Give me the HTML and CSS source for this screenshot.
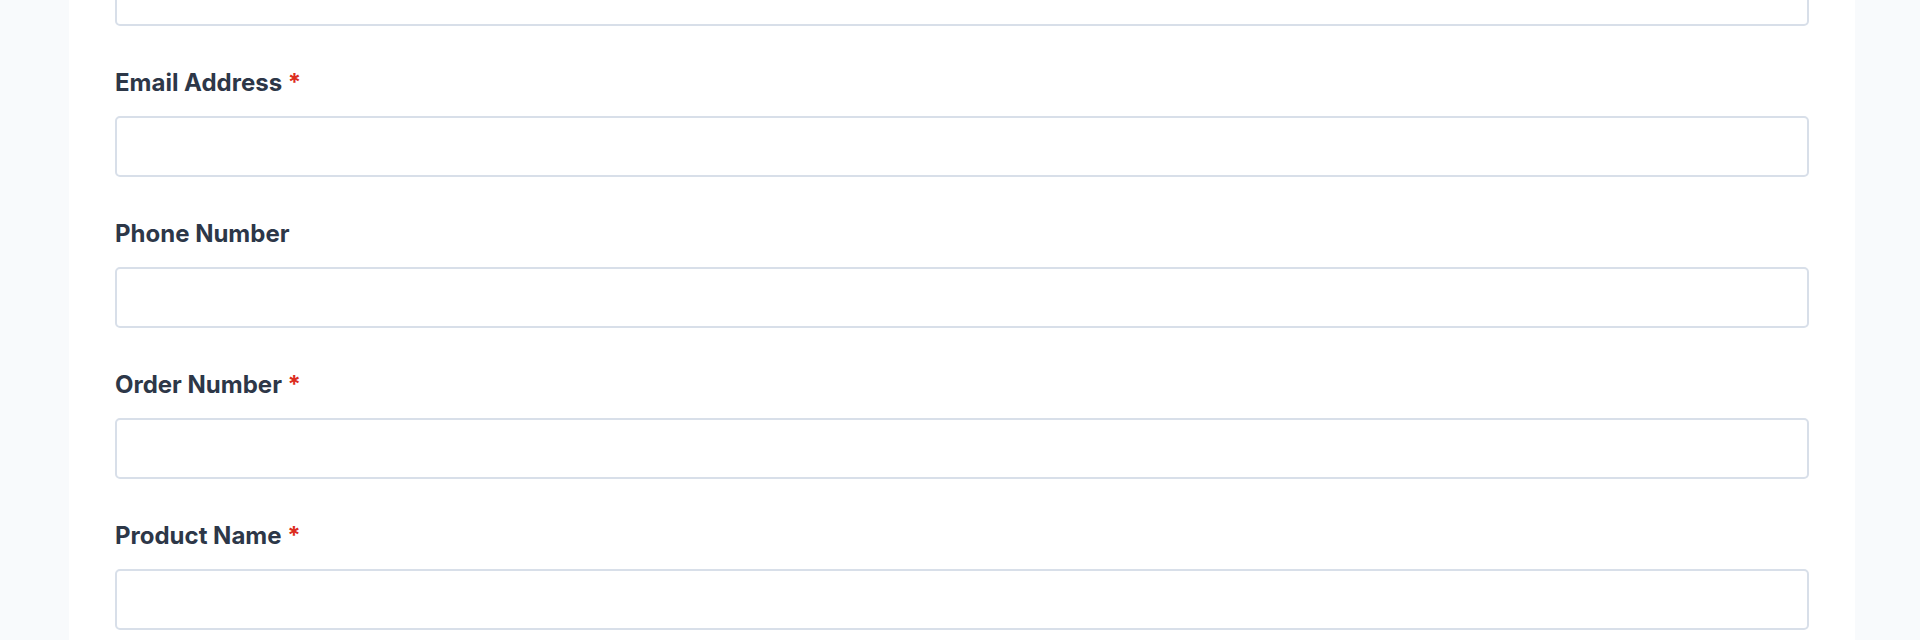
FILE: index.html
```html
<!DOCTYPE html>
<html lang="en">
<head>
  <meta charset="UTF-8" />
  <meta name="viewport" content="width=device-width, initial-scale=1.0">
  <title>Contact Form</title>
  <link rel="stylesheet" href="styles.css">
</head>
<body>
  <div class="wrapper">
    <form class="contact-form">
      <div class="form-group">
        <input type="text" id="fullName" name="fullName" aria-label="Full Name" required>
      </div>

      <div class="form-group">
        <label for="email">Email Address <span class="required">*</span></label>
        <input type="email" id="email" name="email" required>
      </div>

      <div class="form-group">
        <label for="phone">Phone Number</label>
        <input type="tel" id="phone" name="phone">
      </div>

      <div class="form-group">
        <label for="orderNumber">Order Number <span class="required">*</span></label>
        <input type="text" id="orderNumber" name="orderNumber" required>
      </div>

      <div class="form-group">
        <label for="productName">Product Name <span class="required">*</span></label>
        <input type="text" id="productName" name="productName" required>
      </div>
    </form>
  </div>
</body>
</html>
```

FILE: styles.css
```css
* {
  box-sizing: border-box;
}

body {
  font-family: Inter, "Liberation Sans", Arial, sans-serif;
  margin: 0;
  background-color: #f8fafc;
  color: #2d3748;
  overflow: hidden;
}

/* White panel that holds the form */
.wrapper {
  display: flow-root;
  min-height: 100vh;
  margin: 0 65px 0 69px;
  padding: 0 46px;
  background-color: #fff;
}

/* The first field runs off the top of the view */
.contact-form {
  display: flex;
  flex-direction: column;
  gap: 39px;
  margin-top: -35px;
}

.form-group {
  display: flex;
  flex-direction: column;
  gap: 15px;
}

label {
  font-size: 24px;
  font-weight: 700;
  line-height: 36px;
}

.required {
  color: #dc2d1e;
}

input {
  width: 100%;
  height: 61px;
  padding: 12px 16px;
  border: 2px solid #d8dfe9;
  border-radius: 5px;
  background-color: #fff;
  color: inherit;
  font-family: inherit;
  font-size: 24px;
}

input:focus {
  outline: none;
  border-color: #4299e1;
}
```
